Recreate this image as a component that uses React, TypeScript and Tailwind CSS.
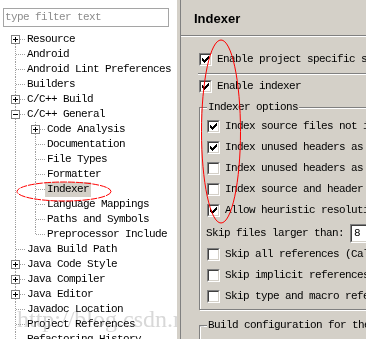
import React from 'react';

const mono = "font-['Liberation_Mono',monospace] text-[11px] tracking-[-0.6px] text-black";

interface TreeRow {
  label: string;
  level: 0 | 1;
  exp?: '+' | '-';
  first?: boolean;
  last?: boolean;
  selected?: boolean;
}

const rows: TreeRow[] = [
  { label: 'Resource', level: 0, exp: '+', first: true },
  { label: 'Android', level: 0 },
  { label: 'Android Lint Preferences', level: 0 },
  { label: 'Builders', level: 0 },
  { label: 'C/C++ Build', level: 0, exp: '+' },
  { label: 'C/C++ General', level: 0, exp: '-' },
  { label: 'Code Analysis', level: 1, exp: '+', first: true },
  { label: 'Documentation', level: 1 },
  { label: 'File Types', level: 1 },
  { label: 'Formatter', level: 1 },
  { label: 'Indexer', level: 1, selected: true },
  { label: 'Language Mappings', level: 1 },
  { label: 'Paths and Symbols', level: 1 },
  { label: 'Preprocessor Include', level: 1, last: true },
  { label: 'Java Build Path', level: 0 },
  { label: 'Java Code Style', level: 0, exp: '+' },
  { label: 'Java Compiler', level: 0, exp: '+' },
  { label: 'Java Editor', level: 0, exp: '+' },
  { label: 'Javadoc Location', level: 0 },
  { label: 'Project References', level: 0 },
  { label: 'Refactoring History', level: 0 },
];

// one 20x15 cell of tree guide lines, with optional expander box
const GuideCell: React.FC<{
  pass?: boolean;
  first?: boolean;
  last?: boolean;
  exp?: '+' | '-';
}> = ({ pass, first, last, exp }) => (
  <svg width={20} height={15} className="shrink-0" shapeRendering="crispEdges">
    <line
      x1={10.5}
      x2={10.5}
      y1={first ? 8 : 0}
      y2={last ? 8 : 15}
      stroke="#a0a0a0"
      strokeDasharray="1 1"
    />
    {!pass && <line x1={11} x2={20} y1={7.5} y2={7.5} stroke="#a0a0a0" strokeDasharray="1 1" />}
    {exp && (
      <g>
        <rect x={6.5} y={3.5} width={8} height={8} fill="white" stroke="#808080" />
        <line x1={8} x2={13} y1={7.5} y2={7.5} stroke="black" />
        {exp === '+' && <line x1={10.5} x2={10.5} y1={5} y2={10} stroke="black" />}
      </g>
    )}
  </svg>
);

const Check: React.FC<{ checked?: boolean }> = ({ checked }) => (
  <span className="inline-flex w-[13px] h-[13px] shrink-0 border border-t-[#808080] border-l-[#808080] border-r-white border-b-white">
    <span className="flex-1 flex items-center justify-center border border-t-[#404040] border-l-[#404040] border-r-[#d4d0c8] border-b-[#d4d0c8] bg-white">
      {checked && (
        <svg width={7} height={7} shapeRendering="crispEdges">
          {[2, 3, 4, 3, 2, 1, 0].map((y, x) => (
            <rect key={x} x={x} y={y} width={1} height={3} fill="black" />
          ))}
        </svg>
      )}
    </span>
  </span>
);

const CheckRow: React.FC<{ checked?: boolean; label: string }> = ({ checked, label }) => (
  <div className="flex items-center gap-[5px] h-[13px] whitespace-nowrap">
    <Check checked={checked} />
    <span>{label}</span>
  </div>
);

const groupBox =
  'w-[260px] pl-[7px] border border-[#808080] shadow-[inset_1px_1px_0_#fff,1px_1px_0_#fff]';

export default function App() {
  return (
    <div className="relative w-[366px] h-[339px] overflow-hidden flex bg-[#d4d0c8]">
      {/* left: filter + tree */}
      <div className={`w-[177px] shrink-0 bg-white pt-[8px] ${mono}`}>
        <div className="ml-[3px] w-[166px] h-[19px] border border-[#a5a5a5] flex items-center pl-[1px] text-[#8c8c8c]">
          type filter text
        </div>
        <div className="mt-[5px] pl-[5px]">
          {rows.map((r) => (
            <div key={r.label} className="flex h-[15px] items-stretch whitespace-nowrap">
              {r.level === 1 && <GuideCell pass />}
              <GuideCell first={r.first && r.level === 0} last={r.last} exp={r.exp} />
              <span
                className={`px-[2px] leading-[15px] ${r.selected ? 'bg-[#d4d0c8]' : ''}`}
              >
                {r.label}
              </span>
            </div>
          ))}
        </div>
      </div>

      {/* sash */}
      <div className="w-[3px] shrink-0 bg-[#d4d0c8]" />
      <div className="w-px shrink-0 bg-[#808080]" />

      {/* right: property page */}
      <div className="flex-1 min-w-0 overflow-hidden bg-[#d4d0c8]">
        <div className="h-[35px] pt-[3px] pl-[13px] flex items-center font-['Liberation_Sans',sans-serif] font-bold text-[13px] text-black">
          Indexer
        </div>
        <div className="h-px bg-[#808080]" />
        <div className="h-px bg-white" />

        <div className={`pl-[18px] ${mono}`}>
          <div className="mt-[16px]">
            <CheckRow checked label="Enable project specific settings" />
          </div>
          <div className="mt-[7px] -ml-px h-px bg-[#808080]" />
          <div className="-ml-px h-px bg-white" />
          <div className="mt-[5px]">
            <CheckRow checked label="Enable indexer" />
          </div>

          <fieldset className={`mt-[8px] pb-[6px] ${groupBox}`}>
            <legend className="px-px leading-[13px] bg-[#d4d0c8] whitespace-nowrap">Indexer options</legend>
            <div className="mt-[6px] flex flex-col gap-[8px]">
              <CheckRow checked label="Index source files not included in the build" />
              <CheckRow checked label="Index unused headers as C++ files" />
              <CheckRow label="Index unused headers as C files" />
              <CheckRow label="Index source and header files opened in editor" />
              <CheckRow checked label="Allow heuristic resolution of includes" />
            </div>
            <div className="mt-[7px] -ml-px flex items-center h-[19px] whitespace-nowrap">
              <span className="w-[144px] shrink-0">Skip files larger than:</span>
              <div className="w-[40px] h-[19px] shrink-0 border border-t-[#808080] border-l-[#808080] border-r-white border-b-white">
                <div className="h-full border border-t-[#404040] border-l-[#404040] border-r-[#d4d0c8] border-b-[#d4d0c8] bg-white pl-[2px] leading-[15px]">
                  8
                </div>
              </div>
            </div>
            <div className="mt-[5px] flex flex-col gap-[8px]">
              <CheckRow label="Skip all references (Call Hierarchy and Search will not work)" />
              <CheckRow label="Skip implicit references (e.g. overloaded operators)" />
              <CheckRow label="Skip type and macro references (Search for these references will not work)" />
            </div>
          </fieldset>

          <fieldset className={`mt-[9px] h-[60px] ${groupBox}`}>
            <legend className="px-px leading-[13px] bg-[#d4d0c8] whitespace-nowrap">
              Build configuration for the indexer
            </legend>
            <div className="mt-[5px] pl-[4px] flex items-center gap-[5px] whitespace-nowrap">
              <span className="w-[12px] h-[12px] rounded-full border border-t-[#606060] border-l-[#606060] border-r-white border-b-white bg-white" />
              <span>Use active build configuration</span>
            </div>
          </fieldset>
        </div>
      </div>

      {/* watermark */}
      <div className="absolute left-[17px] top-[307px] pointer-events-none whitespace-nowrap font-['Liberation_Serif',serif] text-[24px] leading-none text-[#d8d8d8] mix-blend-darken">
        http://blog.csdn.net/winhaijing123
      </div>

      {/* red annotation ellipses */}
      <svg className="absolute inset-0 pointer-events-none" width={366} height={339}>
        <ellipse cx={64} cy={191.5} rx={47} ry={9.5} fill="none" stroke="#ff0000" strokeDasharray="7 1" />
        <ellipse cx={221} cy={131.5} rx={19.5} ry={91.5} fill="none" stroke="#ff0000" />
      </svg>
    </div>
  );
}
